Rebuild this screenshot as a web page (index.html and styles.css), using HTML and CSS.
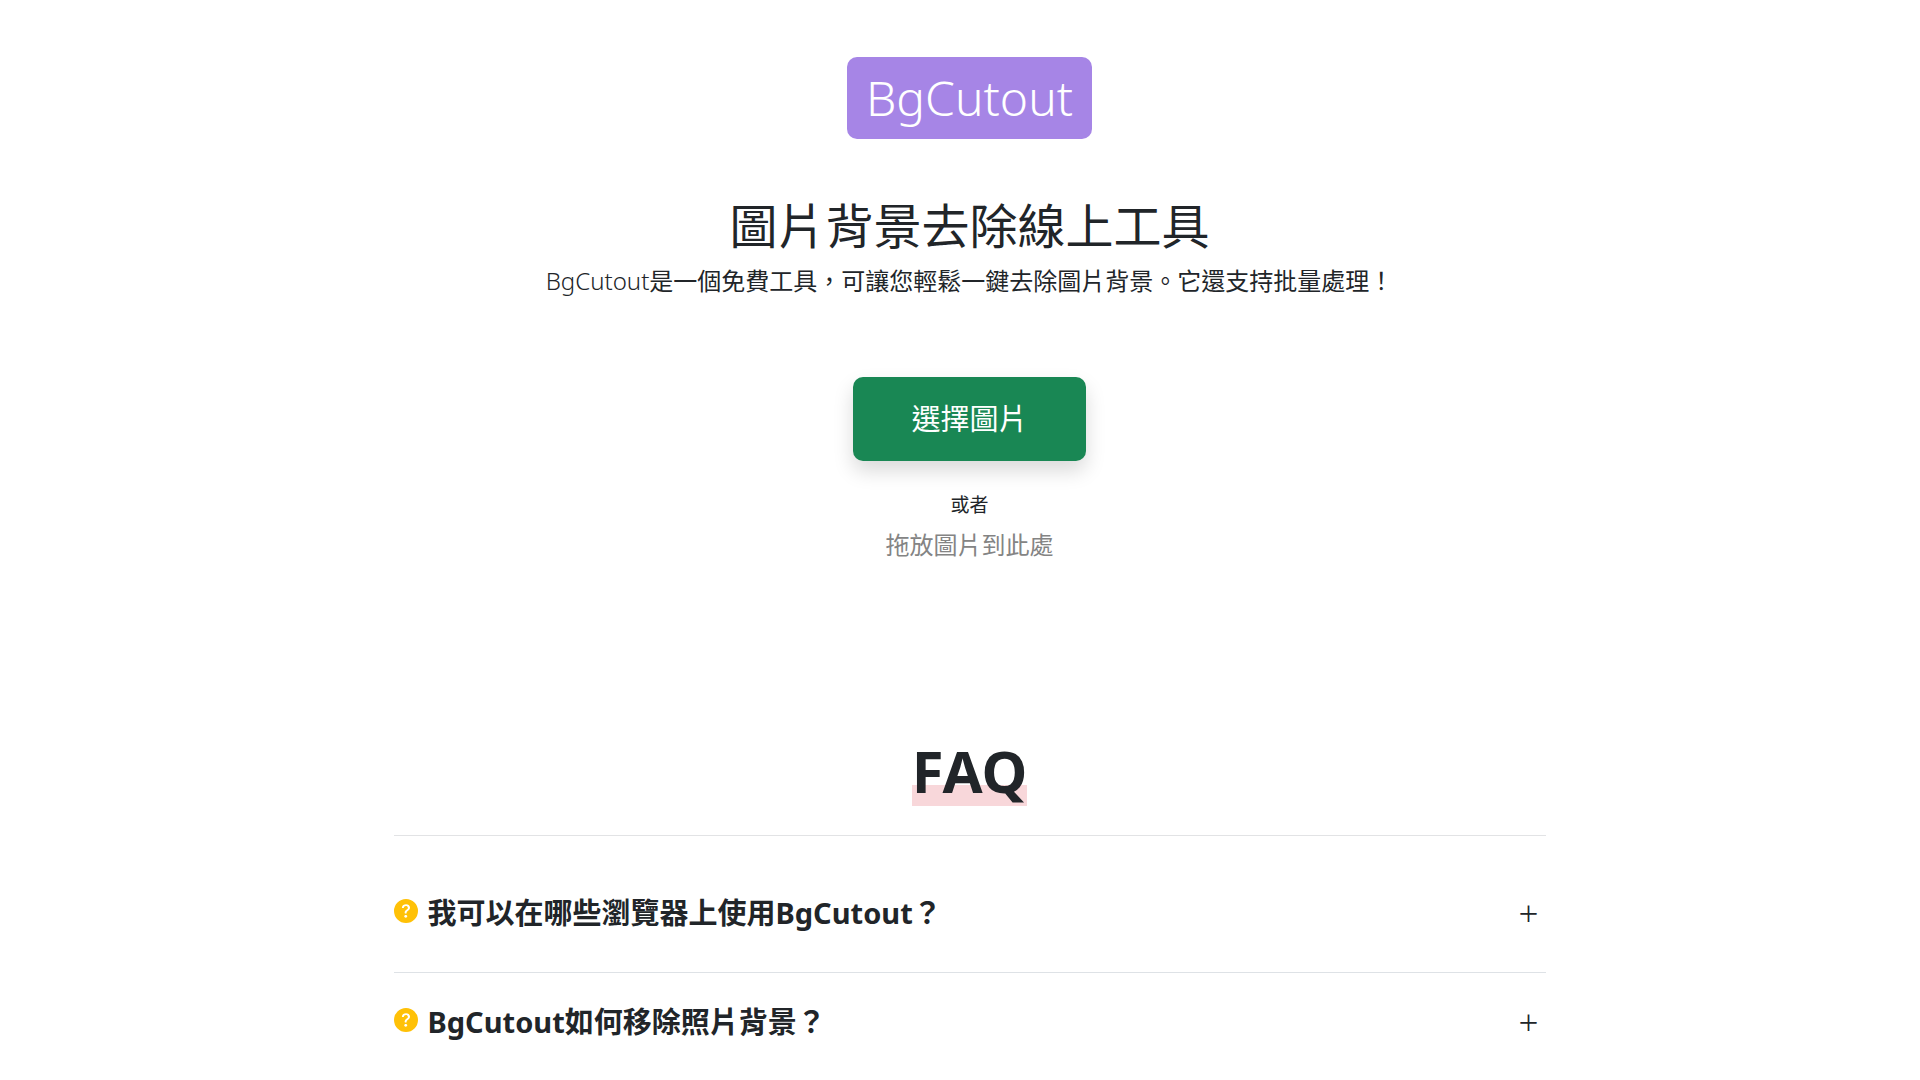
FILE: index.html
```html
<!DOCTYPE html>
<html lang="zh-TW">
<head>
  <meta charset="utf-8">
  <meta name="viewport" content="width=device-width, initial-scale=1">
  <title>BgCutout</title>
  <link rel="stylesheet" href="styles.css">
</head>
<body>
  <main class="page">
    <header class="hero">
      <a class="logo" href="#">BgCutout</a>
      <h1 class="title">圖片背景去除線上工具</h1>
      <p class="lead"><span class="brand">BgCutout</span>是一個免費工具，可讓您輕鬆一鍵去除圖片背景。它還支持批量處理！</p>
    </header>

    <section class="upload">
      <button class="pick" type="button">選擇圖片</button>
      <p class="or">或者</p>
      <p class="drop">拖放圖片到此處</p>
    </section>

    <section class="faq">
      <h2 class="faq-title"><span class="mark">FAQ</span></h2>
      <div class="faq-list">
        <details class="item">
          <summary class="question">
            <svg class="icon" viewBox="0 0 16 16" fill="currentColor" aria-hidden="true"><path d="M16 8A8 8 0 1 1 0 8a8 8 0 0 1 16 0zM5.496 6.033h.825c.138 0 .248-.113.266-.25.09-.656.54-1.134 1.342-1.134.686 0 1.314.343 1.314 1.168 0 .635-.374.927-.965 1.371-.673.489-1.206 1.06-1.168 1.987l.003.217a.25.25 0 0 0 .25.246h.811a.25.25 0 0 0 .25-.25v-.105c0-.718.273-.927 1.01-1.486.609-.463 1.244-.977 1.244-2.056 0-1.511-1.276-2.241-2.673-2.241-1.267 0-2.655.59-2.75 2.286a.237.237 0 0 0 .241.247zm2.325 6.443c.61 0 1.029-.394 1.029-.927 0-.552-.42-.94-1.029-.94-.584 0-1.009.388-1.009.94 0 .533.425.927 1.01.927z"/></svg>
            <span class="label">我可以在哪些瀏覽器上使用BgCutout？</span>
            <span class="plus">+</span>
          </summary>
        </details>
        <details class="item">
          <summary class="question">
            <svg class="icon" viewBox="0 0 16 16" fill="currentColor" aria-hidden="true"><path d="M16 8A8 8 0 1 1 0 8a8 8 0 0 1 16 0zM5.496 6.033h.825c.138 0 .248-.113.266-.25.09-.656.54-1.134 1.342-1.134.686 0 1.314.343 1.314 1.168 0 .635-.374.927-.965 1.371-.673.489-1.206 1.06-1.168 1.987l.003.217a.25.25 0 0 0 .25.246h.811a.25.25 0 0 0 .25-.25v-.105c0-.718.273-.927 1.01-1.486.609-.463 1.244-.977 1.244-2.056 0-1.511-1.276-2.241-2.673-2.241-1.267 0-2.655.59-2.75 2.286a.237.237 0 0 0 .241.247zm2.325 6.443c.61 0 1.029-.394 1.029-.927 0-.552-.42-.94-1.029-.94-.584 0-1.009.388-1.009.94 0 .533.425.927 1.01.927z"/></svg>
            <span class="label">BgCutout如何移除照片背景？</span>
            <span class="plus">+</span>
          </summary>
        </details>
      </div>
    </section>
  </main>
</body>
</html>
```
FILE: styles.css
```css
*,
*::before,
*::after {
  box-sizing: border-box;
}

body {
  margin: 0;
  padding-left: 19px;
  background: #fff;
  color: #212529;
  font-family: "Noto Sans", "Noto Sans CJK TC", sans-serif;
  font-size: 19px;
  line-height: 28px;
}

h1,
h2,
p {
  margin: 0;
}

.page {
  width: 100%;
  max-width: 1152px;
  margin: 0 auto;
  padding-top: 57px;
}

.hero,
.upload {
  display: flex;
  flex-direction: column;
  align-items: center;
  text-align: center;
}

.logo {
  padding: 12px 19px;
  border-radius: 10px;
  background: #a685e6;
  color: #fff;
  font-size: 48px;
  font-weight: 300;
  line-height: 58px;
  text-decoration: none;
}

.title {
  margin-top: 58px;
  font-size: 48px;
  font-weight: 400;
  line-height: 58px;
}

.lead {
  margin-top: 8px;
  font-size: 24px;
  line-height: 36px;
}

.brand {
  font-weight: 300;
}

.upload {
  margin-top: 78px;
}

.pick {
  padding: 20px 58px;
  border: 0;
  border-radius: 10px;
  background: #198754;
  box-shadow: 0 10px 20px rgba(0, 0, 0, 0.15);
  color: #fff;
  font: inherit;
  font-size: 29px;
  line-height: 44px;
}

.or {
  margin-top: 30px;
}

.drop {
  margin-top: 8px;
  color: #848484;
  font-size: 24px;
  line-height: 36px;
}

.faq {
  margin-top: 173px;
}

.faq-title {
  padding-bottom: 29px;
  border-bottom: 1px solid #e2e3e5;
  font-size: 58px;
  line-height: 70px;
  text-align: center;
}

.mark {
  background: linear-gradient(transparent 68%, #f8d7da 68%, #f8d7da 95%, transparent 95%);
}

.faq-list {
  padding-top: 28px;
}

.item {
  border-bottom: 1px solid #dee2e6;
}

.question {
  display: flex;
  align-items: flex-start;
  gap: 10px;
  padding: 27px 7px 38px 0;
  font-size: 29px;
  font-weight: 700;
  line-height: 43px;
  list-style: none;
  cursor: pointer;
}

.item:last-child .question {
  padding-bottom: 48px;
}

.icon {
  flex: none;
  width: 24px;
  height: 24px;
  margin-top: 8px;
  color: #ffc107;
}

.label {
  flex: 1;
}

.plus {
  font-size: 35px;
  font-weight: 300;
}
```
